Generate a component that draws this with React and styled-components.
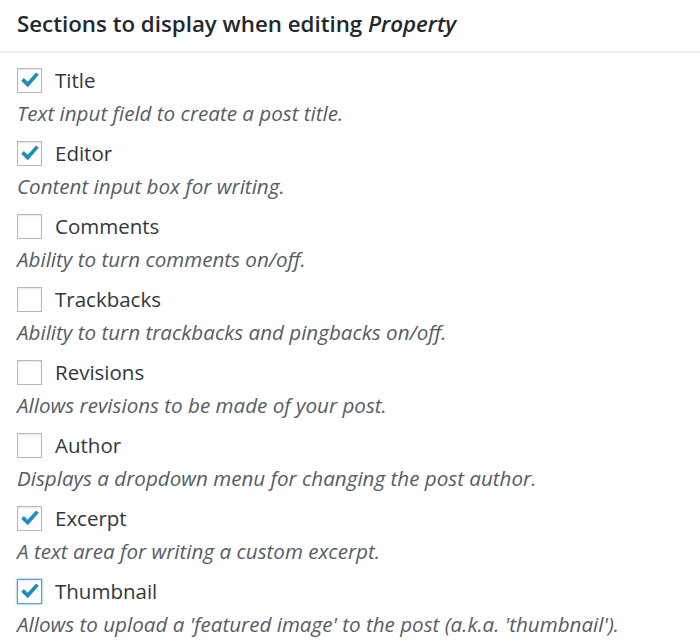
import React from 'react';
import styled, { createGlobalStyle } from 'styled-components';

const GlobalStyle = createGlobalStyle`
    body {
        margin: 0;
        background: #fff;
        font-family: 'Open Sans', 'Noto Sans', sans-serif;
        color: #32373c;
    }
`;

const Panel = styled.div`
    width: 700px;
`;

const Header = styled.h2`
    margin: 0;
    padding: 8px 17px 11px;
    font-size: 22.3px;
    font-weight: 600;
    line-height: 32px;
    color: #23282d;
    border-bottom: 2px solid #eeeeee;
`;

const List = styled.div`
    padding: 12px 17px 0;
`;

const Item = styled.div`
    margin-bottom: 10px;
`;

const Row = styled.label`
    display: flex;
    align-items: center;
    gap: 13px;
    height: 30px;
    font-size: 20.5px;
    color: #32373c;
`;

const Box = styled.span`
    width: 25px;
    height: 25px;
    box-sizing: border-box;
    display: flex;
    align-items: center;
    justify-content: center;
    background: #fff;
    border: 1px solid ${(p) => (p.focused ? '#5b9dd9' : '#b4b9be')};
    box-shadow: ${(p) =>
        p.focused
            ? '0 0 2px rgba(30, 140, 190, 0.8), inset 0 1px 2px rgba(0, 0, 0, 0.07)'
            : 'inset 0 1px 2px rgba(0, 0, 0, 0.1)'};
`;

const Description = styled.p`
    margin: 3px 0 0;
    font-size: 20.6px;
    line-height: 30px;
    font-style: italic;
    color: #555d66;
    white-space: nowrap;
`;

const Check = () => (
    <svg width="22" height="22" viewBox="0 0 20 20">
        <path d="M2 10.6l2.4-2.4 3.5 3.5 7.6-8.6 2.5 2.2-10 11.3z" fill="#1e8cbe" />
    </svg>
);

const sections = [
    { label: 'Title', desc: 'Text input field to create a post title.', checked: true },
    { label: 'Editor', desc: 'Content input box for writing.', checked: true },
    { label: 'Comments', desc: 'Ability to turn comments on/off.' },
    { label: 'Trackbacks', desc: 'Ability to turn trackbacks and pingbacks on/off.' },
    { label: 'Revisions', desc: 'Allows revisions to be made of your post.' },
    { label: 'Author', desc: 'Displays a dropdown menu for changing the post author.' },
    { label: 'Excerpt', desc: 'A text area for writing a custom excerpt.', checked: true },
    {
        label: 'Thumbnail',
        desc: "Allows to upload a 'featured image' to the post (a.k.a. 'thumbnail').",
        checked: true,
        focused: true,
    },
];

const App = () => {
    return (
        <Panel>
            <GlobalStyle />
            <Header>
                Sections to display when editing <em>Property</em>
            </Header>
            <List>
                {sections.map((s) => (
                    <Item key={s.label}>
                        <Row>
                            <Box focused={s.focused}>{s.checked && <Check />}</Box>
                            {s.label}
                        </Row>
                        <Description>{s.desc}</Description>
                    </Item>
                ))}
            </List>
        </Panel>
    );
};

export default App;
